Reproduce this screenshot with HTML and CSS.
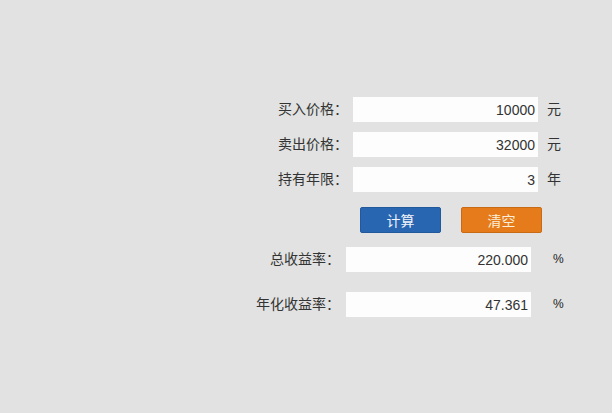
FILE: index.html
```html
<!DOCTYPE html>
<html lang="zh-CN">
<head>
  <meta charset="UTF-8" />
  <title>收益率计算</title>
  <link rel="stylesheet" href="styles.css">
</head>
<body>
  <div class="calc">
    <div class="row">
      <label class="label">买入价格：</label>
      <input class="field" type="text" value="10000">
      <span class="unit">元</span>
    </div>
    <div class="row">
      <label class="label">卖出价格：</label>
      <input class="field" type="text" value="32000">
      <span class="unit">元</span>
    </div>
    <div class="row">
      <label class="label">持有年限：</label>
      <input class="field" type="text" value="3">
      <span class="unit">年</span>
    </div>

    <div class="actions">
      <button class="btn btn-calc">计算</button>
      <button class="btn btn-clear">清空</button>
    </div>

    <div class="row result">
      <label class="label">总收益率：</label>
      <input class="field" type="text" value="220.000" readonly>
      <span class="unit pct">%</span>
    </div>
    <div class="row result result-last">
      <label class="label">年化收益率：</label>
      <input class="field" type="text" value="47.361" readonly>
      <span class="unit pct">%</span>
    </div>
  </div>
</body>
</html>
```

FILE: styles.css
```css
* {
  box-sizing: border-box;
}

body {
  margin: 0;
  background: #e1e2e1;
  font-family: "Liberation Sans", "Noto Sans CJK SC", sans-serif;
  font-size: 14px;
  color: #333;
}

.calc {
  padding-top: 97px;
}

.row {
  display: flex;
  align-items: center;
  height: 25px;
  margin-bottom: 10px;
  padding-left: 248px;
}

.label {
  width: 100px;
  text-align: right;
  line-height: 25px;
  color: #333;
}

.field {
  width: 185px;
  height: 25px;
  margin-left: 5px;
  padding: 0 3px;
  border: none;
  background: #fdfdfd;
  font: inherit;
  color: #333;
  text-align: right;
  outline: none;
}

.unit {
  margin-left: 9px;
  line-height: 25px;
  color: #333;
}

.actions {
  display: flex;
  gap: 20px;
  padding-left: 360px;
  margin-top: 15px;
  margin-bottom: 14px;
}

.btn {
  width: 81px;
  height: 26px;
  border-radius: 2px;
  font: inherit;
  color: #f2f4f8;
  cursor: pointer;
}

.btn-calc {
  background: #2866b2;
  border: 1px solid #22599c;
}

.btn-clear {
  background: #e67b1b;
  border: 1px solid #c96a17;
  color: #fbeed8;
}

.result {
  padding-left: 240px;
  margin-bottom: 20px;
}

.result .field {
  margin-left: 6px;
}

.pct {
  margin-left: 22px;
  font-size: 12px;
  color: #222;
}
```
